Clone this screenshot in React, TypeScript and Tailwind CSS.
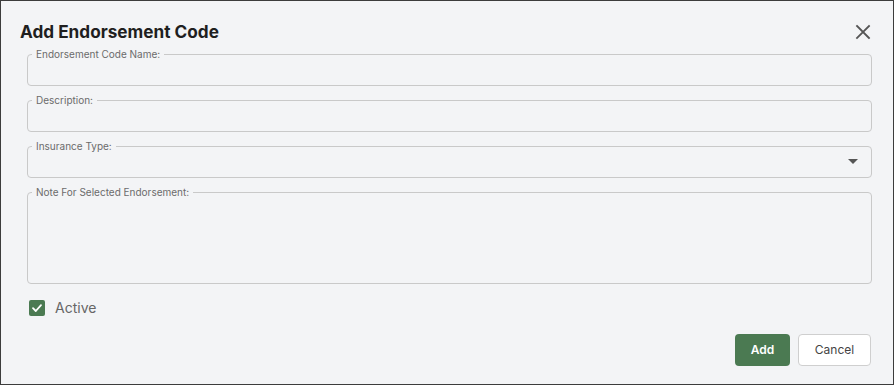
import React from "react";

function Field({ label, h, select }: { label: string; h: string; select?: boolean }) {
  return (
    <fieldset className={`relative border border-[#c9c9c9] rounded-[4px] px-[4px] m-0 min-w-0 ${h}`}>
      <legend className="px-[4px] text-[10px] leading-[12px] text-[#6b6b6b]">{label}</legend>
      {select && (
        <div className="flex justify-end pr-[9px] mt-[7px]">
          <svg width="10" height="5" viewBox="0 0 10 5" className="block">
            <path d="M0 0 L10 0 L5 5 Z" fill="#555" />
          </svg>
        </div>
      )}
    </fieldset>
  );
}

export default function App() {
  return (
    <div
      className="w-[894px] h-[385px] bg-[#f3f4f6] border border-[#3c3c3c] flex flex-col"
      style={{ fontFamily: "Inter, 'Noto Sans', sans-serif" }}
    >
      <div className="flex items-center justify-between pl-[19px] pr-[22px] pt-[18px] h-[43px]">
        <h1 className="text-[17.2px] font-bold text-[#1f1f1f] leading-[22px] m-0">Add Endorsement Code</h1>
        <svg width="16" height="16" viewBox="0 0 16 16">
          <path d="M2 2 L14 14 M14 2 L2 14" stroke="#555" strokeWidth="1.8" strokeLinecap="square" />
        </svg>
      </div>
      <div className="flex flex-col gap-[8px] pl-[26px] pr-[21px] mt-[4px]">
        <Field label="Endorsement Code Name:" h="h-[38px]" />
        <Field label="Description:" h="h-[38px]" />
        <Field label="Insurance Type:" h="h-[38px]" select />
        <Field label="Note For Selected Endorsement:" h="h-[98px]" />
      </div>
      <div className="flex items-center gap-[10px] pl-[28px] mt-[16px]">
        <div className="w-[16px] h-[16px] rounded-[2px] bg-[#4b7a52] flex items-center justify-center">
          <svg width="12" height="12" viewBox="0 0 12 12">
            <path d="M2 6.2 L4.8 9 L10 3.2" stroke="#fff" strokeWidth="1.8" fill="none" strokeLinecap="round" strokeLinejoin="round" />
          </svg>
        </div>
        <span className="text-[14px] text-[#666] leading-[16px]">Active</span>
      </div>
      <div className="flex justify-end gap-[8px] pr-[22px] mt-[18px]">
        <button className="w-[55px] h-[32px] rounded-[4px] bg-[#4b7a52] text-white text-[12px] font-semibold">Add</button>
        <button className="w-[73px] h-[32px] rounded-[4px] bg-white border border-[#cfcfcf] text-[#444] text-[12px]">Cancel</button>
      </div>
    </div>
  );
}
